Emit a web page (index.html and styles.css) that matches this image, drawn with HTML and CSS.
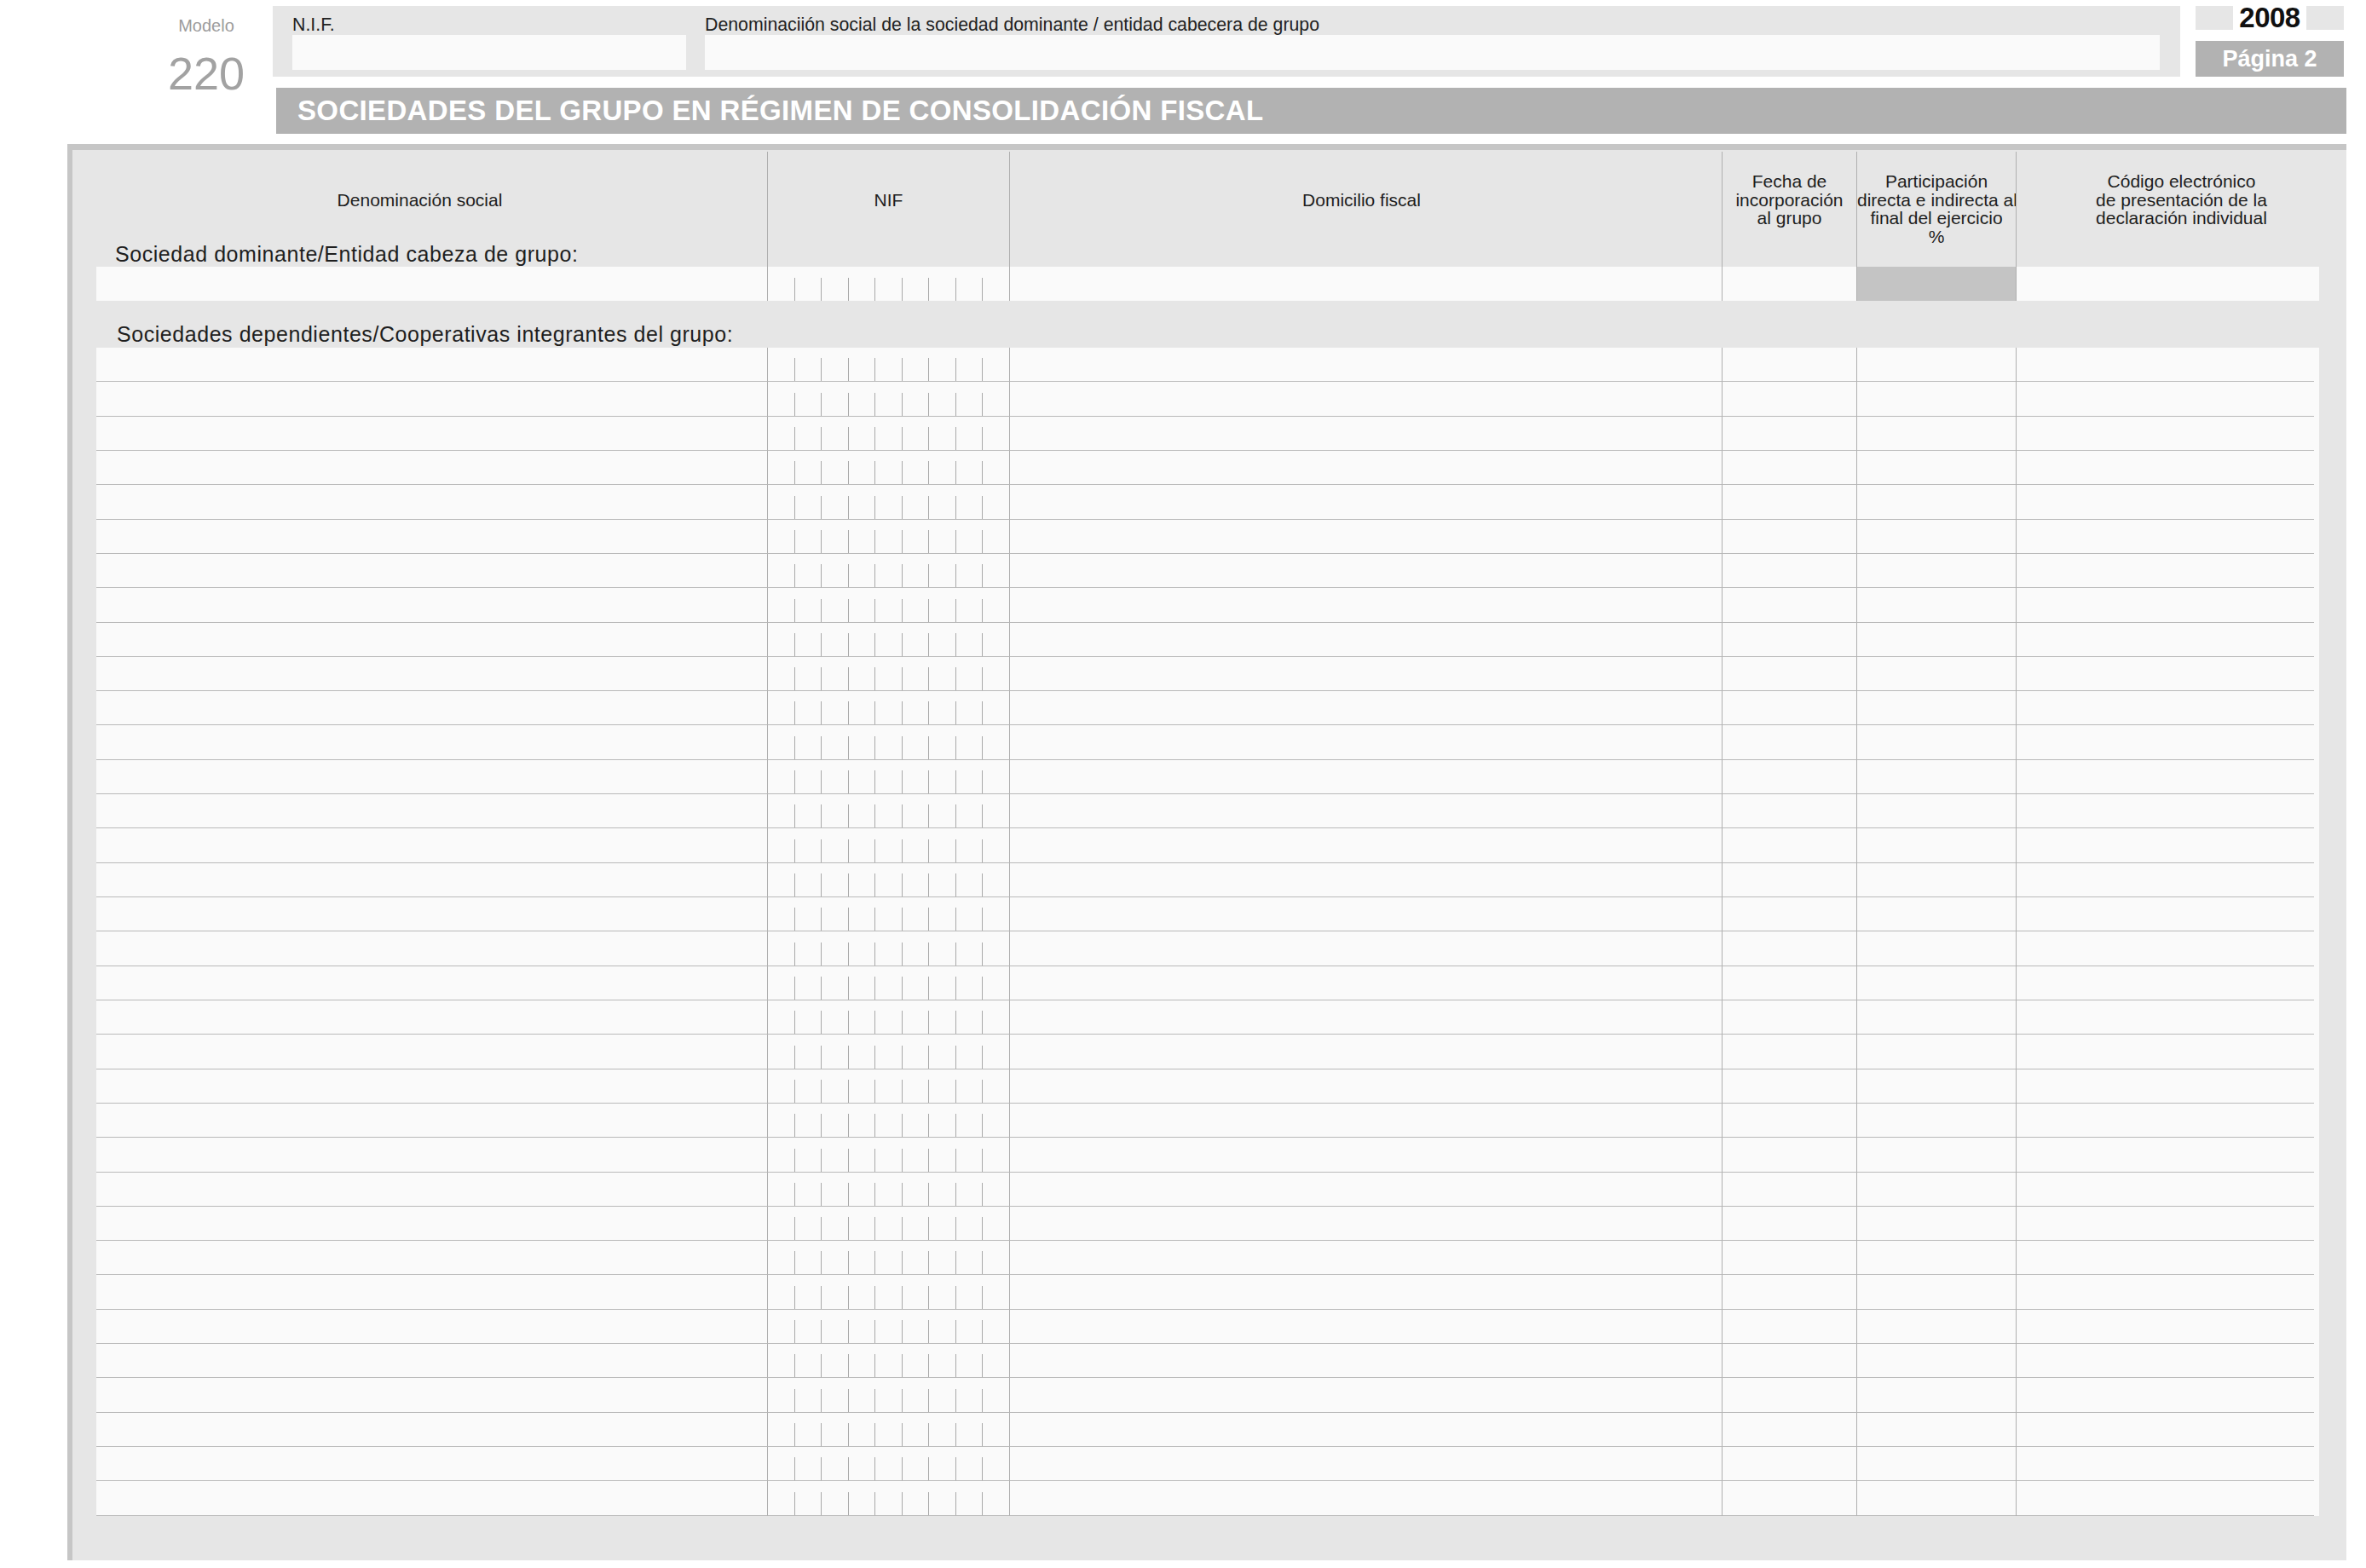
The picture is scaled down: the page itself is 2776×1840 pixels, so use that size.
FILE: index.html
```html
<!DOCTYPE html>
<html lang="es">
<head>
<meta charset="utf-8">
<title>Modelo 220 - Página 2</title>
<link rel="stylesheet" href="styles.css">
</head>
<body>
<div class="page">
  <div class="top">
    <div class="modelo">
      <div class="mlabel">Modelo</div>
      <div class="mnum">220</div>
    </div>
    <div class="hbox">
      <div class="field nif-f">
        <div class="flabel">N.I.F.</div>
        <div class="finput"></div>
      </div>
      <div class="field den-f">
        <div class="flabel">Denominaciión social de la sociedad dominante / entidad cabecera de grupo</div>
        <div class="finput"></div>
      </div>
    </div>
    <div class="side">
      <div class="year"><span>2008</span></div>
      <div class="pagina">Página 2</div>
    </div>
  </div>

  <div class="titlebar">SOCIEDADES DEL GRUPO EN RÉGIMEN DE CONSOLIDACIÓN FISCAL</div>

  <div class="panel">
    <div class="thead">
      <div class="th first">
        <div class="ttl">Denominación social</div>
        <div class="dlabel">Sociedad dominante/Entidad cabeza de grupo:</div>
      </div>
      <div class="th b single">NIF</div>
      <div class="th b single dom-h">Domicilio fiscal</div>
      <div class="th b">Fecha de<br>incorporación<br>al grupo</div>
      <div class="th b">Participación<br>directa e indirecta al<br>final del ejercicio<br>%</div>
      <div class="th b">Código electrónico<br>de presentación de la<br>declaración individual</div>
    </div>

    <div class="row dom">
      <div class="cell"></div><div class="cell b nif"></div><div class="cell b"></div><div class="cell b"></div><div class="cell b grey"></div><div class="cell b"></div>
    </div>

    <div class="sublabel">Sociedades dependientes/Cooperativas integrantes del grupo:</div>

    <div class="rows">
      <div class="row dep"><div class="cell"></div><div class="cell b nif"></div><div class="cell b"></div><div class="cell b"></div><div class="cell b"></div><div class="cell b last"></div></div>
      <div class="row dep"><div class="cell"></div><div class="cell b nif"></div><div class="cell b"></div><div class="cell b"></div><div class="cell b"></div><div class="cell b last"></div></div>
      <div class="row dep"><div class="cell"></div><div class="cell b nif"></div><div class="cell b"></div><div class="cell b"></div><div class="cell b"></div><div class="cell b last"></div></div>
      <div class="row dep"><div class="cell"></div><div class="cell b nif"></div><div class="cell b"></div><div class="cell b"></div><div class="cell b"></div><div class="cell b last"></div></div>
      <div class="row dep"><div class="cell"></div><div class="cell b nif"></div><div class="cell b"></div><div class="cell b"></div><div class="cell b"></div><div class="cell b last"></div></div>
      <div class="row dep"><div class="cell"></div><div class="cell b nif"></div><div class="cell b"></div><div class="cell b"></div><div class="cell b"></div><div class="cell b last"></div></div>
      <div class="row dep"><div class="cell"></div><div class="cell b nif"></div><div class="cell b"></div><div class="cell b"></div><div class="cell b"></div><div class="cell b last"></div></div>
      <div class="row dep"><div class="cell"></div><div class="cell b nif"></div><div class="cell b"></div><div class="cell b"></div><div class="cell b"></div><div class="cell b last"></div></div>
      <div class="row dep"><div class="cell"></div><div class="cell b nif"></div><div class="cell b"></div><div class="cell b"></div><div class="cell b"></div><div class="cell b last"></div></div>
      <div class="row dep"><div class="cell"></div><div class="cell b nif"></div><div class="cell b"></div><div class="cell b"></div><div class="cell b"></div><div class="cell b last"></div></div>
      <div class="row dep"><div class="cell"></div><div class="cell b nif"></div><div class="cell b"></div><div class="cell b"></div><div class="cell b"></div><div class="cell b last"></div></div>
      <div class="row dep"><div class="cell"></div><div class="cell b nif"></div><div class="cell b"></div><div class="cell b"></div><div class="cell b"></div><div class="cell b last"></div></div>
      <div class="row dep"><div class="cell"></div><div class="cell b nif"></div><div class="cell b"></div><div class="cell b"></div><div class="cell b"></div><div class="cell b last"></div></div>
      <div class="row dep"><div class="cell"></div><div class="cell b nif"></div><div class="cell b"></div><div class="cell b"></div><div class="cell b"></div><div class="cell b last"></div></div>
      <div class="row dep"><div class="cell"></div><div class="cell b nif"></div><div class="cell b"></div><div class="cell b"></div><div class="cell b"></div><div class="cell b last"></div></div>
      <div class="row dep"><div class="cell"></div><div class="cell b nif"></div><div class="cell b"></div><div class="cell b"></div><div class="cell b"></div><div class="cell b last"></div></div>
      <div class="row dep"><div class="cell"></div><div class="cell b nif"></div><div class="cell b"></div><div class="cell b"></div><div class="cell b"></div><div class="cell b last"></div></div>
      <div class="row dep"><div class="cell"></div><div class="cell b nif"></div><div class="cell b"></div><div class="cell b"></div><div class="cell b"></div><div class="cell b last"></div></div>
      <div class="row dep"><div class="cell"></div><div class="cell b nif"></div><div class="cell b"></div><div class="cell b"></div><div class="cell b"></div><div class="cell b last"></div></div>
      <div class="row dep"><div class="cell"></div><div class="cell b nif"></div><div class="cell b"></div><div class="cell b"></div><div class="cell b"></div><div class="cell b last"></div></div>
      <div class="row dep"><div class="cell"></div><div class="cell b nif"></div><div class="cell b"></div><div class="cell b"></div><div class="cell b"></div><div class="cell b last"></div></div>
      <div class="row dep"><div class="cell"></div><div class="cell b nif"></div><div class="cell b"></div><div class="cell b"></div><div class="cell b"></div><div class="cell b last"></div></div>
      <div class="row dep"><div class="cell"></div><div class="cell b nif"></div><div class="cell b"></div><div class="cell b"></div><div class="cell b"></div><div class="cell b last"></div></div>
      <div class="row dep"><div class="cell"></div><div class="cell b nif"></div><div class="cell b"></div><div class="cell b"></div><div class="cell b"></div><div class="cell b last"></div></div>
      <div class="row dep"><div class="cell"></div><div class="cell b nif"></div><div class="cell b"></div><div class="cell b"></div><div class="cell b"></div><div class="cell b last"></div></div>
      <div class="row dep"><div class="cell"></div><div class="cell b nif"></div><div class="cell b"></div><div class="cell b"></div><div class="cell b"></div><div class="cell b last"></div></div>
      <div class="row dep"><div class="cell"></div><div class="cell b nif"></div><div class="cell b"></div><div class="cell b"></div><div class="cell b"></div><div class="cell b last"></div></div>
      <div class="row dep"><div class="cell"></div><div class="cell b nif"></div><div class="cell b"></div><div class="cell b"></div><div class="cell b"></div><div class="cell b last"></div></div>
      <div class="row dep"><div class="cell"></div><div class="cell b nif"></div><div class="cell b"></div><div class="cell b"></div><div class="cell b"></div><div class="cell b last"></div></div>
      <div class="row dep"><div class="cell"></div><div class="cell b nif"></div><div class="cell b"></div><div class="cell b"></div><div class="cell b"></div><div class="cell b last"></div></div>
      <div class="row dep"><div class="cell"></div><div class="cell b nif"></div><div class="cell b"></div><div class="cell b"></div><div class="cell b"></div><div class="cell b last"></div></div>
      <div class="row dep"><div class="cell"></div><div class="cell b nif"></div><div class="cell b"></div><div class="cell b"></div><div class="cell b"></div><div class="cell b last"></div></div>
      <div class="row dep"><div class="cell"></div><div class="cell b nif"></div><div class="cell b"></div><div class="cell b"></div><div class="cell b"></div><div class="cell b last"></div></div>
      <div class="row dep"><div class="cell"></div><div class="cell b nif"></div><div class="cell b"></div><div class="cell b"></div><div class="cell b"></div><div class="cell b last"></div></div>
    </div>
  </div>
</div>
</body>
</html>
```

FILE: styles.css
```css
* { box-sizing: border-box; }

html, body {
  margin: 0;
  padding: 0;
  background: #ffffff;
}

body {
  font-family: "Liberation Sans", Arial, Helvetica, sans-serif;
  color: #1e1e1e;
}

.page {
  width: 2776px;
  height: 1840px;
}

/* ---------- top strip ---------- */
.top {
  display: flex;
  align-items: flex-start;
  height: 90px;
}

.modelo {
  width: 320px;
  padding-left: 164px;
  padding-top: 19px;
  text-align: center;
  color: #9c9c9c;
}

.mlabel {
  font-size: 20px;
  line-height: 22px;
}

.mnum {
  margin-top: 18px;
  font-size: 54px;
  line-height: 54px;
  color: #a2a2a2;
}

.hbox {
  margin-top: 7px;
  width: 2238px;
  height: 83px;
  background: #e6e6e6;
  display: flex;
  gap: 22px;
  padding: 10px 24px 8px 23px;
}

.field {
  display: flex;
  flex-direction: column;
}

.nif-f { width: 462px; }
.den-f { flex: 1; }

.flabel {
  font-size: 21.3px;
  line-height: 24px;
  height: 24px;
  white-space: nowrap;
  color: #222;
}

.finput {
  flex: 1;
  background: #fafafa;
}

.side {
  margin-top: 7px;
  margin-left: 18px;
  width: 174px;
}

.year {
  height: 28px;
  background: #e6e6e6;
  display: flex;
  justify-content: center;
}

.year span {
  display: block;
  width: 86px;
  background: #ffffff;
  text-align: center;
  font-weight: bold;
  font-size: 33px;
  line-height: 28px;
  color: #111;
  letter-spacing: -0.5px;
}

.pagina {
  margin-top: 13px;
  height: 42px;
  background: #b2b2b2;
  color: #ffffff;
  font-weight: bold;
  font-size: 27px;
  line-height: 42px;
  text-align: center;
}

/* ---------- title bar ---------- */
.titlebar {
  margin-top: 13px;
  margin-left: 324px;
  width: 2429px;
  height: 54px;
  background: #b2b2b2;
  color: #ffffff;
  font-weight: bold;
  font-size: 33px;
  letter-spacing: 0.35px;
  line-height: 53px;
  padding-left: 25px;
  white-space: nowrap;
}

/* ---------- main panel ---------- */
.panel {
  margin-top: 12px;
  margin-left: 79px;
  width: 2674px;
  background: #e6e6e6;
  border-left: 6px solid #c6c6c6;
  border-top: 7px solid #c6c6c6;
  padding-bottom: 52px;
}

.thead {
  display: grid;
  grid-template-columns: 815px 284px 836px 158px 187px 388px;
  height: 137px;
}

.th {
  font-size: 21px;
  line-height: 21.5px;
  text-align: center;
  padding-top: 26px;
  color: #1e1e1e;
  white-space: nowrap;
}

.th.b {
  border-left: 1px solid #afafaf;
  margin-top: 2px;
  padding-top: 24px;
}

.th.single { padding-top: 45.5px; }

.th.dom-h { padding-right: 10px; }

.th.first {
  display: flex;
  flex-direction: column;
  padding-top: 47.5px;
}

.dlabel {
  margin-top: auto;
  margin-bottom: 1px;
  padding-left: 50px;
  text-align: left;
  font-size: 25px;
  line-height: 28px;
  letter-spacing: 0.55px;
}

.row {
  display: grid;
  grid-template-columns: 787px 284px 836px 158px 187px 356px;
  margin-left: 28px;
  width: 2608px;
}

.row.dom { height: 40px; }

.row.dep {
  height: 40.32px;
}

.cell {
  background: #fafafa;
}

.row.dep .cell {
  border-bottom: 1px solid #b9b9b9;
}

.row.dep .cell.last {
  border-bottom: none;
  background-image: linear-gradient(to right, #b9b9b9 0, #b9b9b9 349px, #fafafa 349px);
  background-size: 100% 1px;
  background-position: 0 100%;
  background-repeat: no-repeat;
}

.cell.b {
  border-left: 1px solid #afafaf;
}

.cell.grey {
  background: #c4c4c4;
}

.cell.nif {
  background-color: #fafafa;
  background-image: repeating-linear-gradient(to right, transparent 0, transparent 30.56px, #a9a9a9 30.56px, #a9a9a9 31.56px);
  background-size: 253px 27px;
  background-position: 0 100%;
  background-repeat: no-repeat;
}

.sublabel {
  height: 55px;
  padding-top: 25px;
  padding-left: 52px;
  font-size: 25px;
  line-height: 28px;
  letter-spacing: 0.55px;
  color: #1e1e1e;
  white-space: nowrap;
}
```
